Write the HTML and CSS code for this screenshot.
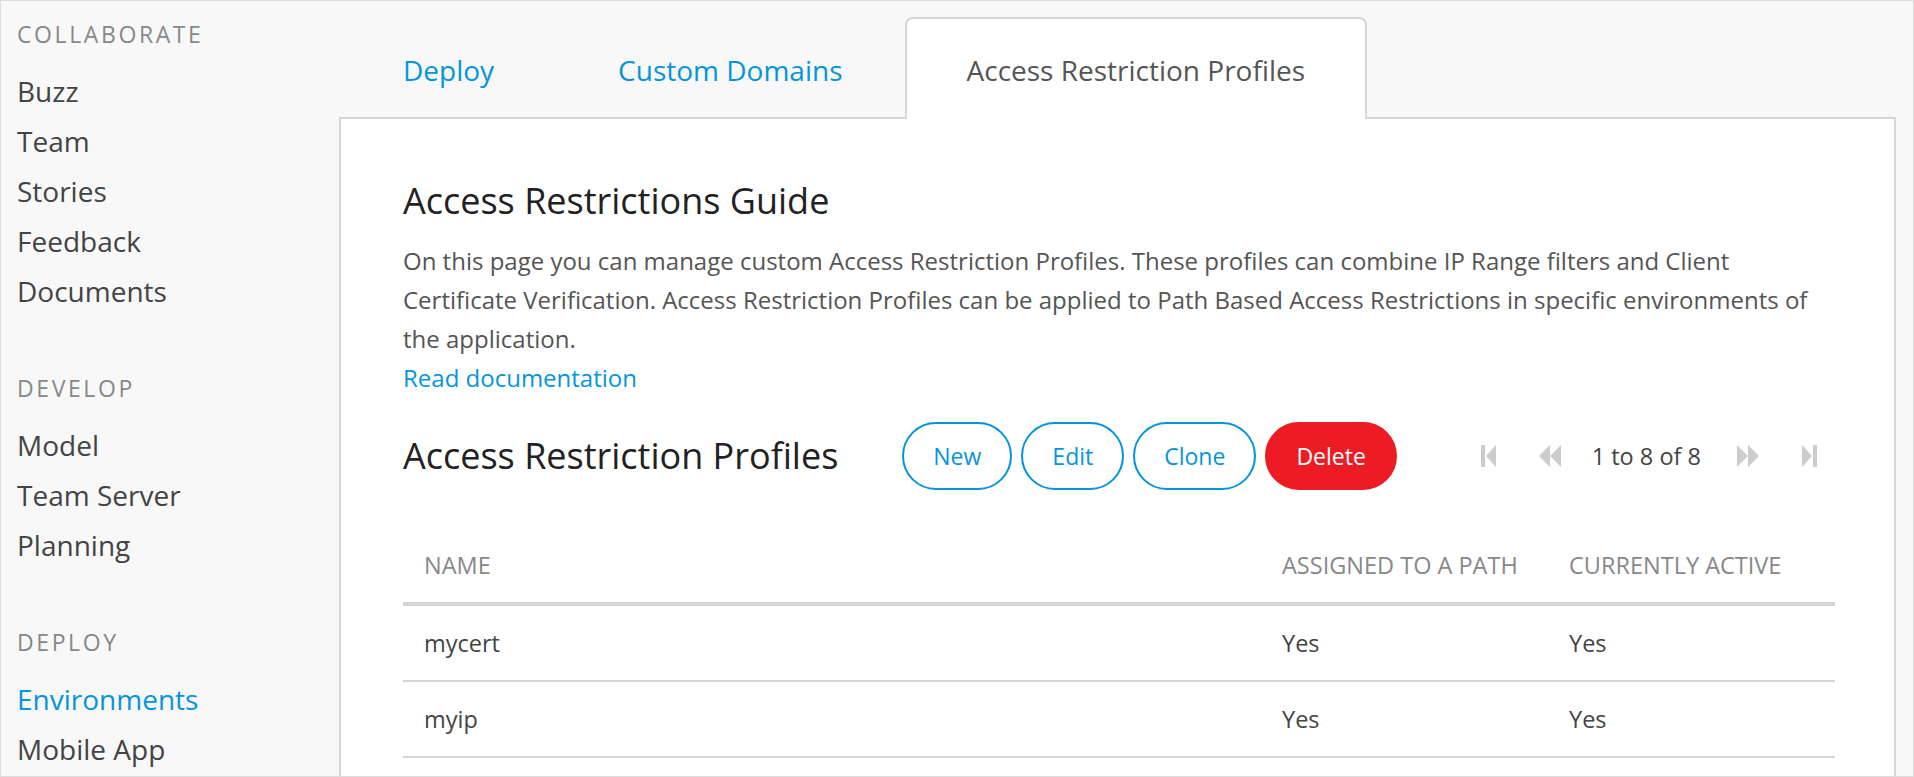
FILE: index.html
```html
<!DOCTYPE html>
<html lang="en">
<head>
<meta charset="utf-8">
<title>Access Restriction Profiles</title>
<link rel="stylesheet" href="styles.css">
</head>
<body>
<div class="app">
  <nav class="sidebar">
    <div class="nav-section">
      <div class="nav-title">Collaborate</div>
      <a class="nav-item">Buzz</a>
      <a class="nav-item">Team</a>
      <a class="nav-item">Stories</a>
      <a class="nav-item">Feedback</a>
      <a class="nav-item">Documents</a>
    </div>
    <div class="nav-section">
      <div class="nav-title">Develop</div>
      <a class="nav-item">Model</a>
      <a class="nav-item">Team Server</a>
      <a class="nav-item">Planning</a>
    </div>
    <div class="nav-section">
      <div class="nav-title">Deploy</div>
      <a class="nav-item active">Environments</a>
      <a class="nav-item">Mobile App</a>
    </div>
  </nav>
  <main class="main">
    <div class="tabs">
      <a class="tab">Deploy</a>
      <a class="tab">Custom Domains</a>
      <a class="tab active">Access Restriction Profiles</a>
    </div>
    <section class="panel">
      <h1 class="guide-title">Access Restrictions Guide</h1>
      <p class="guide-text">On this page you can manage custom Access Restriction Profiles. These profiles can combine IP Range filters and Client<br>Certificate Verification. Access Restriction Profiles can be applied to Path Based Access Restrictions in specific environments of<br>the application.</p>
      <a class="doc-link">Read documentation</a>

      <div class="toolbar">
        <h2 class="list-title">Access Restriction Profiles</h2>
        <div class="actions">
          <button class="btn">New</button>
          <button class="btn">Edit</button>
          <button class="btn">Clone</button>
          <button class="btn btn-danger">Delete</button>
        </div>
        <div class="pager">
          <svg class="pg-first" width="15" height="22" viewBox="0 0 15 22"><rect x="0" y="0" width="4" height="22"/><polygon points="15,0 15,22 5,11"/></svg>
          <svg class="pg-prev" width="22" height="22" viewBox="0 0 22 22"><polygon points="11,0 11,22 0,11"/><polygon points="22,0 22,22 11,11"/></svg>
          <span class="pg-text">1 to 8 of 8</span>
          <svg class="pg-next" width="22" height="22" viewBox="0 0 22 22"><polygon points="0,0 0,22 11,11"/><polygon points="11,0 11,22 22,11"/></svg>
          <svg class="pg-last" width="15" height="22" viewBox="0 0 15 22"><polygon points="0,0 0,22 10,11"/><rect x="11" y="0" width="4" height="22"/></svg>
        </div>
      </div>

      <table class="grid">
        <colgroup>
          <col>
          <col class="col-fixed">
          <col class="col-fixed">
        </colgroup>
        <thead>
          <tr><th>Name</th><th>Assigned to a path</th><th>Currently active</th></tr>
        </thead>
        <tbody>
          <tr><td>mycert</td><td>Yes</td><td>Yes</td></tr>
          <tr><td>myip</td><td>Yes</td><td>Yes</td></tr>
        </tbody>
      </table>
    </section>
  </main>
</div>
</body>
</html>
```

FILE: styles.css
```css
html, body {
  margin: 0;
  padding: 0;
}

body {
  font-family: "Open Sans", "Noto Sans", "Liberation Sans", sans-serif;
  color: #444;
  background: #f8f8f8;
}

.app {
  box-sizing: border-box;
  height: 777px;
  border: 1px solid #dcdcdc;
  display: flex;
  overflow: hidden;
  background: #f8f8f8;
}

/* Sidebar */
.sidebar {
  width: 338px;
  flex: none;
  box-sizing: border-box;
  padding: 18px 0 0 16px;
  display: flex;
  flex-direction: column;
}

.nav-section {
  display: flex;
  flex-direction: column;
}

.nav-section + .nav-section {
  margin-top: 57px;
}

.nav-title {
  font-size: 23px;
  line-height: 30px;
  letter-spacing: 2.6px;
  text-transform: uppercase;
  color: #888;
  margin-bottom: 17px;
}

.nav-item {
  font-size: 28px;
  line-height: 50px;
  color: #444;
}

.nav-item.active {
  color: #0595db;
}

/* Main */
.main {
  flex: 1;
  min-width: 0;
  display: flex;
  flex-direction: column;
  padding: 16px 17px 0 0;
}

.tabs {
  display: flex;
  margin-left: 2px;
  position: relative;
  z-index: 1;
}

.tab {
  box-sizing: border-box;
  height: 102px;
  margin-bottom: -2px;
  padding: 26px 60px 0;
  border: 2px solid transparent;
  border-bottom: none;
  font-size: 28px;
  line-height: 50px;
  color: #0595db;
  white-space: nowrap;
}

.tab.active {
  background: #fff;
  border-color: #d6d6d6;
  border-radius: 8px 8px 0 0;
  color: #555;
}

.panel {
  flex: 1;
  background: #fff;
  border: 2px solid #d6d6d6;
  border-bottom: none;
  padding: 60px 59px 0 62px;
}

.guide-title {
  margin: 0 0 18px;
  font-size: 36px;
  line-height: 44px;
  font-weight: 400;
  color: #222;
}

.guide-text {
  margin: 0;
  font-size: 24px;
  line-height: 39px;
  color: #555;
}

.doc-link {
  display: block;
  font-size: 24px;
  line-height: 39px;
  color: #0595db;
}

.toolbar {
  display: flex;
  align-items: center;
  margin-top: 25px;
  height: 68px;
}

.list-title {
  margin: 0;
  font-size: 36px;
  line-height: 44px;
  font-weight: 400;
  color: #222;
}

.actions {
  display: flex;
  gap: 9px;
  margin-left: 64px;
}

.btn {
  box-sizing: border-box;
  height: 68px;
  padding: 0 29px;
  border: 2px solid #0595db;
  border-radius: 34px;
  background: #fff;
  color: #0595db;
  font-family: inherit;
  font-size: 23px;
  line-height: 30px;
}

.btn-danger {
  background: #ed1c24;
  border-color: #ed1c24;
  color: #fff;
}

.pager {
  margin-left: auto;
  margin-right: 18px;
  display: flex;
  align-items: center;
}

.pager svg {
  fill: #cccccc;
  display: block;
}

.pg-prev {
  margin-left: 43px;
}

.pg-text {
  margin: 0 36px 0 31px;
  font-size: 23.5px;
  line-height: 30px;
  color: #444;
}

.pg-last {
  margin-left: 43px;
}

/* Table */
.grid {
  width: 100%;
  margin-top: 38px;
  border-collapse: collapse;
  table-layout: fixed;
}

.col-fixed {
  width: 287px;
}

.grid th,
.grid td {
  padding: 20px 21px;
  font-size: 23.5px;
  line-height: 34px;
  text-align: left;
  font-weight: 400;
}

.grid th {
  color: #888;
  text-transform: uppercase;
  border-bottom: 4px solid #d6d6d6;
}

.grid td {
  color: #444;
  border-bottom: 2px solid #d6d6d6;
}
```
